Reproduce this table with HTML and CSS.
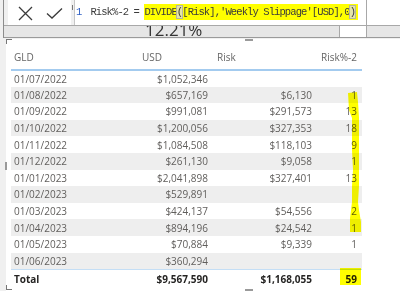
FILE: index.html
```html
<!DOCTYPE html>
<html lang="en">
<head>
    <meta charset="UTF-8">
    <meta name="viewport" content="width=device-width, initial-scale=1.0">
    <title>Risk%-2</title>
    <link rel="stylesheet" href="styles.css">
</head>
<body>
    <div class="top">
        <div class="formula-bar">
            <div class="commit">
                <svg class="icon" width="63" height="25" viewBox="0 0 63 25">
                    <path d="M11 7 L24 20 M24 7 L11 20" />
                    <path d="M39 13.5 L44 18 L54 8.5" />
                </svg>
            </div>
            <div class="expand"><span></span></div>
            <div class="formula">
                <div class="code"><span class="line-no">1</span><span>Risk%-2 = </span><span class="hl">DIVIDE<span class="match">(</span>[Risk],'Weekly Slippage'[USD],0<span class="match">)</span></span></div>
                <div class="formula-end"></div>
            </div>
        </div>
        <div class="band">
            <div class="card-value"><span>12.21%</span></div>
            <div class="band-box"></div>
        </div>
    </div>

    <div class="visual">
        <span class="corner corner-top"></span>
        <span class="corner corner-bottom"></span>
        <span class="handle handle-top"></span>
        <span class="handle handle-left"></span>
        <span class="handle handle-bottom"></span>
        <table class="matrix">
            <thead>
                <tr>
                    <th class="col-gld">GLD</th>
                    <th class="col-usd">USD</th>
                    <th class="col-risk">Risk</th>
                    <th class="col-pct">Risk%-2</th>
                </tr>
            </thead>
            <tbody>
                <tr><td>01/07/2022</td><td class="num">$1,052,346</td><td class="num"></td><td class="num"></td></tr>
                <tr><td>01/08/2022</td><td class="num">$657,169</td><td class="num">$6,130</td><td class="num">1</td></tr>
                <tr><td>01/09/2022</td><td class="num">$991,081</td><td class="num">$291,573</td><td class="num">13</td></tr>
                <tr><td>01/10/2022</td><td class="num">$1,200,056</td><td class="num">$327,353</td><td class="num">18</td></tr>
                <tr><td>01/11/2022</td><td class="num">$1,084,508</td><td class="num">$118,103</td><td class="num">9</td></tr>
                <tr><td>01/12/2022</td><td class="num">$261,130</td><td class="num">$9,058</td><td class="num">1</td></tr>
                <tr><td>01/01/2023</td><td class="num">$2,041,898</td><td class="num">$327,401</td><td class="num">13</td></tr>
                <tr><td>01/02/2023</td><td class="num">$529,891</td><td class="num"></td><td class="num"></td></tr>
                <tr><td>01/03/2023</td><td class="num">$424,137</td><td class="num">$54,556</td><td class="num">2</td></tr>
                <tr><td>01/04/2023</td><td class="num">$894,196</td><td class="num">$24,542</td><td class="num">1</td></tr>
                <tr><td>01/05/2023</td><td class="num">$70,884</td><td class="num">$9,339</td><td class="num">1</td></tr>
                <tr><td>01/06/2023</td><td class="num">$360,294</td><td class="num"></td><td class="num"></td></tr>
            </tbody>
            <tfoot>
                <tr><td>Total</td><td class="num">$9,567,590</td><td class="num">$1,168,055</td><td class="num">59</td></tr>
            </tfoot>
        </table>
    </div>

    <!-- highlighter strokes drawn over the screenshot -->
    <svg class="marker" width="400" height="291" viewBox="0 0 400 291">
        <path d="M348 93 L357 92 L358 102 L359 118 L359 186 L358 202 L359 210 L361 222 L361 232 L350 232 L350 218 L352 202 L352 186 L353 170 L352 150 L352 118 L349 110 Z" />
        <rect x="340" y="268" width="21" height="17" />
    </svg>
</body>
</html>
```

FILE: styles.css
```css
:root {
    --canvas: #f0f0f0;
    --band: #e6e6e6;
    --line: #a8a8a8;
    --text: #605e5c;
    --strong: #252423;
    --stripe: #eeeeee;
    --accent-line: #a3cbef;
    --marker: #ffff00;
}

* {
    margin: 0;
    padding: 0;
    box-sizing: border-box;
}

body {
    position: relative;
    width: 400px;
    height: 291px;
    overflow: hidden;
    background: var(--canvas);
    font-family: 'Segoe UI', 'Open Sans', sans-serif;
    color: var(--text);
}

/* formula bar + card peeking below it */
.top {
    margin-left: 3px;
    border-left: 1px solid #8c8c8c;
    background: var(--canvas);
}

.formula-bar {
    display: flex;
    height: 26px;
    border-bottom: 1px solid var(--line);
}

.commit {
    width: 63px;
    margin-left: 4px;
    background: #fff;
}

.icon path {
    fill: none;
    stroke: #3b3b3b;
    stroke-width: 1.3;
}

.expand {
    width: 3px;
    position: relative;
}

.expand span {
    position: absolute;
    left: 1px;
    top: 5px;
    width: 1px;
    height: 5px;
    background: #777;
}

.formula {
    flex: 1;
    min-width: 0;
    display: flex;
    background: #fff;
    border-left: 1px solid #c6c6c6;
}

.code {
    flex: 1;
    min-width: 0;
    overflow: hidden;
    padding: 5px 0 0 1px;
    font-family: 'Liberation Mono', 'DejaVu Sans Mono', monospace;
    font-size: 10.5px;
    letter-spacing: -0.9px;
    line-height: 15px;
    color: #3a3a3a;
    white-space: pre;
}

.line-no {
    color: #2f5fc4;
    margin-right: 9px;
}

.hl {
    background: var(--marker);
    padding: 2px 3px 2px 0;
}

.match {
    outline: 1px solid #b5b5a0;
    background: #e4e4a8;
}

.formula-end {
    width: 34px;
    border-left: 1px solid var(--line);
}

.band {
    display: flex;
    height: 12px;
    background: var(--band);
    border-bottom: 1px solid #9a9a9a;
}

.card-value {
    flex: 1;
    display: flex;
    align-items: flex-end;
    overflow: hidden;
    padding-left: 141px;
}

.card-value span {
    font-size: 17px;
    line-height: 17px;
    margin-bottom: -1px;
    color: #333;
}

.band-box {
    width: 28px;
    margin-right: 33px;
    background: #fff;
    border-left: 1px solid var(--line);
    border-right: 1px solid var(--line);
}

/* table visual */
.visual {
    position: relative;
    height: 252px;
    margin: 1px 0 0 6px;
    padding: 5px 0 0 5px;
    background: #fff;
}

.corner {
    position: absolute;
    left: 0;
    width: 6px;
    height: 5px;
    border-left: 1px solid #777;
}

.corner-top {
    top: 0;
    border-top: 1px solid #777;
}

.corner-bottom {
    bottom: 1px;
    border-bottom: 1px solid #777;
}

.handle {
    position: absolute;
    background: #9a9a9a;
}

.handle-top {
    top: 0;
    left: 239px;
    width: 8px;
    height: 2px;
}

.handle-bottom {
    bottom: 0;
    left: 239px;
    width: 8px;
    height: 2px;
}

.handle-left {
    top: 123px;
    left: -1px;
    width: 2px;
    height: 8px;
}

.matrix {
    width: 351px;
    border-collapse: collapse;
    font-size: 10px;
    table-layout: fixed;
}

.col-gld { width: 127px; }
.col-usd { width: 74px; }
.col-risk { width: 105px; }
.col-pct { width: 45px; }

.matrix th {
    height: 26px;
    padding: 0 4px;
    text-align: left;
    font-weight: 400;
    color: #666;
    border-bottom: 2px solid var(--accent-line);
}

.matrix th.col-gld { padding-left: 3px; }
.matrix th.col-risk { padding-left: 5px; }

.matrix td {
    height: 16.6px;
    padding: 0 4px 0 3px;
    white-space: nowrap;
    line-height: 12px;
}

.matrix td.num {
    text-align: right;
    padding-right: 4px;
}

.matrix td.num + td.num {
    padding-right: 5px;
}

.matrix tbody tr:nth-child(even) td {
    background: var(--stripe);
}

.matrix tfoot td {
    height: 19px;
    font-weight: 700;
    color: var(--strong);
    border-top: 1px solid #c4def5;
}

.marker {
    position: absolute;
    left: 0;
    top: 0;
    pointer-events: none;
    mix-blend-mode: multiply;
}

.marker path,
.marker rect {
    fill: var(--marker);
}
```
